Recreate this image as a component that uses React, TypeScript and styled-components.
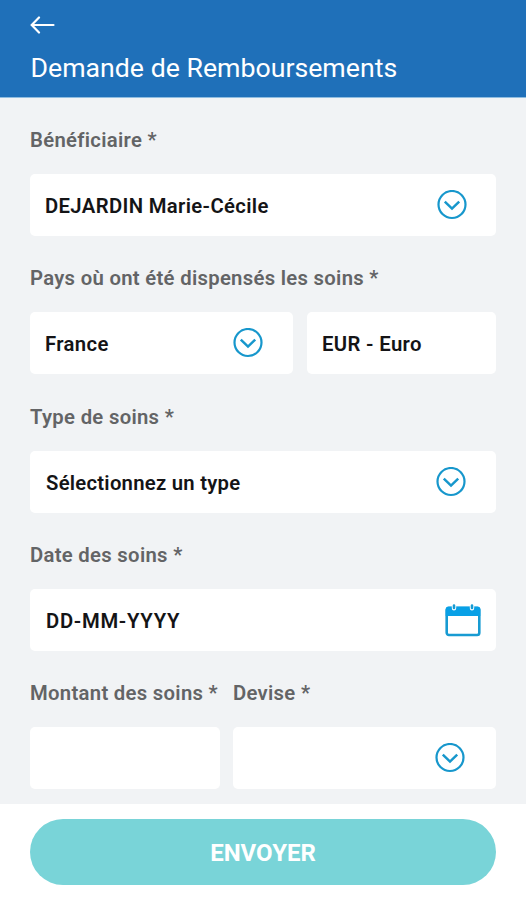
import React from "react";
import styled, { createGlobalStyle } from "styled-components";

const Global = createGlobalStyle`
  * { box-sizing: border-box; }
  body { margin: 0; font-family: Roboto, sans-serif; background: #f1f3f5; }
`;

const Screen = styled.div`
  width: 526px;
  height: 900px;
  display: flex;
  flex-direction: column;
  overflow: hidden;
  background: #f1f3f5;
`;

const Header = styled.header`
  height: 98px;
  flex: none;
  padding: 16px 30px 0;
  background: #1f70b9;
  border-bottom: 1px solid #8fbde0;
  color: #fff;
`;

const BackButton = styled.button`
  display: block;
  width: 25px;
  height: 18px;
  padding: 0;
  border: 0;
  background: none;
  color: #fff;
  svg { display: block; }
`;

const Title = styled.h1`
  margin: 17px 0 0;
  padding-left: 0.5px;
  font-size: 26.7px;
  line-height: 34px;
  font-weight: 400;
  white-space: nowrap;
`;

const Form = styled.main`
  height: 706px;
  flex: none;
  padding: 29px 30px 0;
`;

const Group = styled.section`
  height: 138.25px;
`;

const Columns = styled.div<{ $template?: string; $gap?: number }>`
  display: grid;
  grid-template-columns: ${(p) => p.$template ?? "1fr"};
  column-gap: ${(p) => p.$gap ?? 0}px;
`;

const Label = styled.div`
  height: 47px;
  line-height: 26px;
  font-size: 20.3px;
  font-weight: 600;
  letter-spacing: 0.3px;
  color: #636466;
  white-space: nowrap;
`;

const Field = styled.div<{ $left?: number; $right?: number }>`
  height: 62px;
  border-radius: 5px;
  background: #fff;
  display: flex;
  align-items: center;
  justify-content: space-between;
  padding: 0 ${(p) => p.$right ?? 29}px 0 ${(p) => p.$left ?? 15}px;
`;

const Value = styled.span<{ $spacing?: number }>`
  padding-top: 2px;
  font-size: 20.3px;
  line-height: 24px;
  font-weight: 600;
  letter-spacing: ${(p) => p.$spacing ?? 0.35}px;
  color: #141416;
  white-space: nowrap;
`;

const Footer = styled.footer`
  flex: 1;
  background: #fff;
  padding: 15px 30px 0;
`;

const Submit = styled.button`
  display: block;
  width: 466px;
  height: 66px;
  padding: 2px 0 0;
  border: 0;
  border-radius: 33px;
  background: #79d4d8;
  color: #fff;
  font: 700 24px Roboto, sans-serif;
`;

const ChevronIcon = () => (
  <svg width="30" height="30" viewBox="0 0 30 30" fill="none" stroke="#1797cc" strokeWidth="2.2">
    <circle cx="15" cy="14.5" r="13.5" />
    <path d="M7.8 11.6 15 18.6l7.2-7" strokeWidth="2.5" />
  </svg>
);

const CalendarIcon = () => (
  <svg width="36" height="34" viewBox="0 0 36 34" fill="none">
    <rect x="1.7" y="5" width="32.6" height="27" rx="2.2" stroke="#189bd2" strokeWidth="2.6" />
    <path d="M3.5 3.5h29q2.8 0 2.8 3V13H.7V6.5q0-3 2.8-3z" fill="#08a0e6" />
    <path d="M9 2.8v2.5M27 2.8v2.5" stroke="#fff" strokeWidth="4.4" strokeLinecap="round" />
    <path d="M9 2.5v2.5M27 2.5v2.5" stroke="#189bd2" strokeWidth="2.6" strokeLinecap="round" />
  </svg>
);

export default function App() {
  return (
    <Screen>
      <Global />
      <Header>
        <BackButton aria-label="Retour">
          <svg width="25" height="18" viewBox="0 0 25 18" fill="none" stroke="currentColor" strokeWidth="2.2">
            <path d="M23.5 9H2M9 1.5 1.7 9 9 16.5" strokeLinecap="round" />
          </svg>
        </BackButton>
        <Title>Demande de Remboursements</Title>
      </Header>
      <Form>
        <Group>
          <Label>Bénéficiaire *</Label>
          <Field><Value>DEJARDIN Marie-Cécile</Value><ChevronIcon /></Field>
        </Group>
        <Group>
          <Label>Pays où ont été dispensés les soins *</Label>
          <Columns $template="263px 189px" $gap={14}>
            <Field $right={30}><Value>France</Value><ChevronIcon /></Field>
            <Field><Value>EUR - Euro</Value></Field>
          </Columns>
        </Group>
        <Group>
          <Label>Type de soins *</Label>
          <Field $left={16} $right={30}><Value $spacing={0.25}>Sélectionnez un type</Value><ChevronIcon /></Field>
        </Group>
        <Group>
          <Label>Date des soins *</Label>
          <Field $left={16} $right={15}><Value $spacing={0.7}>DD-MM-YYYY</Value><CalendarIcon /></Field>
        </Group>
        <Columns $template="190px 263px" $gap={13}>
          <div><Label>Montant des soins *</Label><Field /></div>
          <div><Label>Devise *</Label><Field $right={31}><Value /><ChevronIcon /></Field></div>
        </Columns>
      </Form>
      <Footer><Submit>ENVOYER</Submit></Footer>
    </Screen>
  );
}
